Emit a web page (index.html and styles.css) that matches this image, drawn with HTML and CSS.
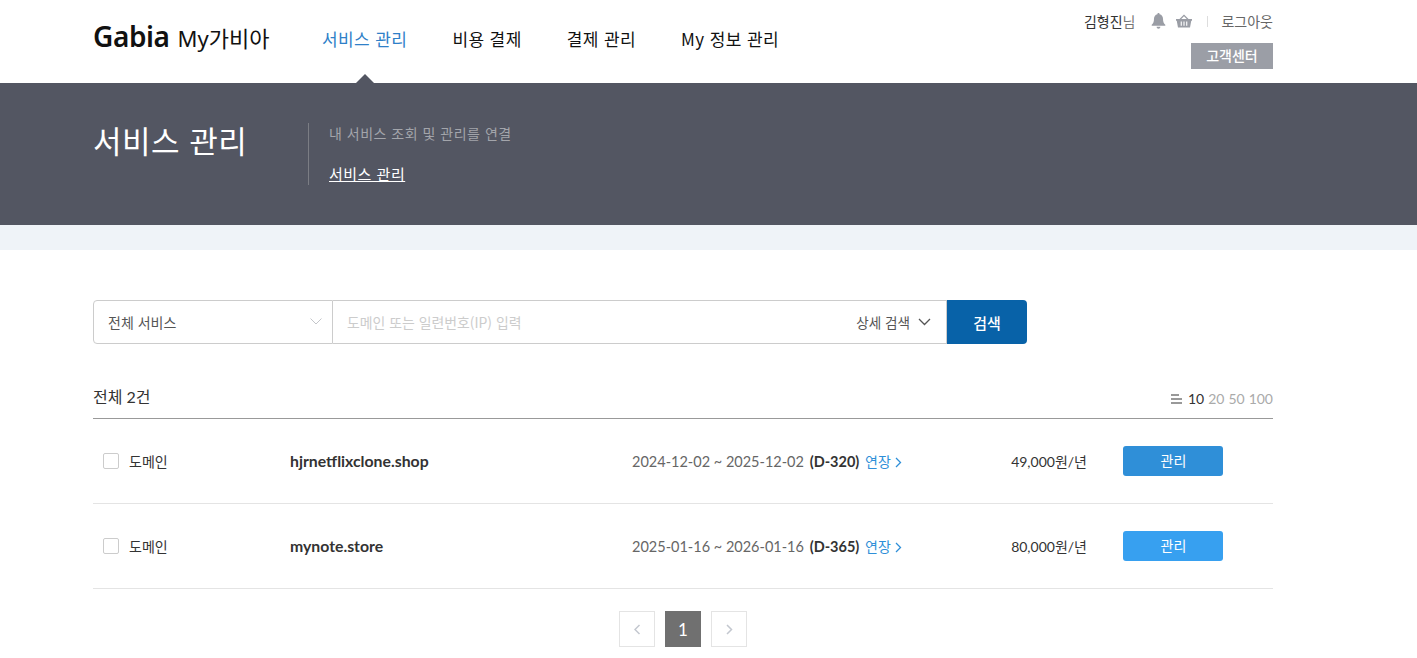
FILE: index.html
```html
<!DOCTYPE html>
<html lang="ko">
<head>
    <meta charset="UTF-8">
    <meta name="viewport" content="width=device-width, initial-scale=1.0">
    <title>My가비아 - 서비스 관리</title>
    <link rel="stylesheet" href="styles.css">
</head>
<body>
    <header class="header">
        <div class="wrap header-inner">
            <a class="logo" href="#"><span class="logo-brand">Gabia</span> <span class="logo-sub">My가비아</span></a>
            <nav class="gnb">
                <a class="gnb-item active" href="#">서비스 관리</a>
                <a class="gnb-item" href="#">비용 결제</a>
                <a class="gnb-item" href="#">결제 관리</a>
                <a class="gnb-item" href="#">My 정보 관리</a>
            </nav>
            <div class="util">
                <div class="util-top">
                    <span class="user"><b>김형진</b>님</span>
                    <svg class="icon-bell" width="15" height="16" viewBox="0 0 15 16"><path fill="#9a9da5" d="M7.5 0c.7 0 1.1.5 1.1 1.2C10.800 1.700 12 3.500 12 5.800c0 3.200.8 4.600 2.300 6v1H.7v-1C2.200 10.400 3 9 3 5.800 3 3.500 4.200 1.700 6.400 1.200 6.400.5 6.800 0 7.500 0zM5.600 13.800h3.800c0 1.100-.8 2-1.900 2s-1.900-.9-1.900-2z"/></svg>
                    <svg class="icon-basket" width="16" height="14" viewBox="0 0 17 14"><path fill="#9a9da5" d="M8.500 0 13.300 5H17v1.700h-.8L14.900 14H2.100L.8 6.700H0V5h3.700zM8.500 1.900 5.600 5h5.800zM5 7.500v4.500h1.200V7.500zm2.900 0v4.500h1.200V7.500zm2.900 0v4.500H12V7.500z"/></svg>
                    <i class="util-sep"></i>
                    <a class="logout" href="#">로그아웃</a>
                </div>
                <a class="cs-btn" href="#">고객센터</a>
            </div>
        </div>
    </header>

    <section class="banner">
        <div class="wrap banner-inner">
            <h1 class="banner-title">서비스 관리</h1>
            <div class="banner-desc">
                <p>내 서비스 조회 및 관리를 연결</p>
                <a href="#">서비스 관리</a>
            </div>
        </div>
    </section>
    <div class="strip"></div>

    <main class="wrap content">
        <form class="search">
            <div class="search-select">
                <span>전체 서비스</span>
                <svg width="12" height="7" viewBox="0 0 12 7"><path d="M.5.5 6 6 11.500.5" fill="none" stroke="#c4c6ca"/></svg>
            </div>
            <div class="search-field">
                <span class="placeholder">도메인 또는 일련번호(IP) 입력</span>
                <span class="search-more">상세 검색
                    <svg width="13" height="8" viewBox="0 0 13 8"><path d="M1 1l5.500 5.500L12 1" fill="none" stroke="#555" stroke-width="1.300"/></svg>
                </span>
            </div>
            <button class="search-btn" type="button">검색</button>
        </form>

        <div class="list-head">
            <span class="total">전체 2건</span>
            <div class="page-size">
                <svg width="11" height="10" viewBox="0 0 11 10"><path fill="#999" d="M0 0h8v2H0zM0 4h11v2H0zM0 8h11v2H0z"/></svg>
                <b>10</b><span>20</span><span>50</span><span>100</span>
            </div>
        </div>

        <ul class="list">
            <li class="row">
                <label class="row-type"><i class="check"></i>도메인</label>
                <strong class="row-name">hjrnetflixclone.shop</strong>
                <div class="row-date">2024-12-02 ~ 2025-12-02 <b>(D-320)</b> <a href="#">연장<svg width="7" height="11" viewBox="0 0 7 11"><path d="M1 1l4.500 4.500L1 10" fill="none" stroke="#2f8fd8" stroke-width="1.300"/></svg></a></div>
                <div class="row-price">49,000원/년</div>
                <a class="row-btn dim" href="#">관리</a>
            </li>
            <li class="row">
                <label class="row-type"><i class="check"></i>도메인</label>
                <strong class="row-name">mynote.store</strong>
                <div class="row-date">2025-01-16 ~ 2026-01-16 <b>(D-365)</b> <a href="#">연장<svg width="7" height="11" viewBox="0 0 7 11"><path d="M1 1l4.500 4.500L1 10" fill="none" stroke="#2f8fd8" stroke-width="1.300"/></svg></a></div>
                <div class="row-price">80,000원/년</div>
                <a class="row-btn" href="#">관리</a>
            </li>
        </ul>

        <div class="pager">
            <a class="pager-btn" href="#"><svg width="7" height="11" viewBox="0 0 7 11"><path d="M5.500 1 1 5.500 5.500 10" fill="none" stroke="#c3c7cf" stroke-width="1.500"/></svg></a>
            <a class="pager-num" href="#">1</a>
            <a class="pager-btn" href="#"><svg width="7" height="11" viewBox="0 0 7 11"><path d="M1 1l4.500 4.500L1 10" fill="none" stroke="#c3c7cf" stroke-width="1.500"/></svg></a>
        </div>
    </main>
</body>
</html>
```

FILE: styles.css
```css
* {
    box-sizing: border-box;
}

body {
    margin: 0;
    height: 658px;
    overflow: hidden;
    background: #fff;
    font-family: Lato, "Noto Sans CJK KR", sans-serif;
    font-size: 14px;
    color: #333;
}

a {
    text-decoration: none;
    color: inherit;
}

.wrap {
    width: 1180px;
    margin-left: 93px;
}

/* header */
.header {
    height: 83px;
}

.header-inner {
    display: flex;
    height: 83px;
    position: relative;
}

.logo {
    display: flex;
    align-items: baseline;
    padding-top: 17px;
    width: 229px;
    color: #111;
}

.logo-brand {
    font-family: "Noto Sans", sans-serif;
    font-size: 28px;
    font-weight: 600;
    letter-spacing: -0.4px;
    margin-right: 8px;
}

.logo-sub {
    font-family: "Noto Sans", "Noto Sans CJK KR", sans-serif;
    font-size: 22px;
}

.gnb {
    display: flex;
    gap: 45px;
    padding-top: 27px;
}

.gnb-item {
    font-family: "Noto Sans CJK KR", sans-serif;
    font-size: 17px;
    letter-spacing: 0.4px;
    line-height: 24px;
    color: #111;
    position: relative;
    height: 56px;
}

.gnb-item.active {
    color: #2f80c8;
}

.gnb-item.active::after {
    content: "";
    position: absolute;
    left: 50%;
    bottom: 0;
    margin-left: -9px;
    border: 9px solid transparent;
    border-top: 0;
    border-bottom-color: #535662;
}

.util {
    margin-left: auto;
    display: flex;
    flex-direction: column;
    align-items: flex-end;
}

.util-top {
    display: flex;
    align-items: center;
    height: 43px;
    padding-bottom: 1px;
    font-family: "Noto Sans CJK KR", sans-serif;
    font-size: 14px;
    color: #666;
}

.user {
    color: #777;
    margin-right: 16px;
}

.user b {
    font-weight: 400;
    color: #333;
}

.icon-basket {
    margin-left: 10px;
}

.util-sep {
    width: 1px;
    height: 11px;
    background: #ddd;
    margin: 0 13px 0 15px;
}

.cs-btn {
    width: 82px;
    height: 26px;
    line-height: 25px;
    text-align: center;
    background: #9b9ea6;
    color: #fff;
    font-family: "Noto Sans CJK KR", sans-serif;
    font-size: 14px;
    font-weight: 500;
}

/* banner */
.banner {
    height: 142px;
    background: #535662;
}

.banner-inner {
    display: flex;
    padding-top: 39px;
}

.banner-title {
    width: 215px;
    margin: 0;
    font-family: "Noto Sans CJK KR", sans-serif;
    font-size: 31px;
    font-weight: 400;
    letter-spacing: 0.5px;
    line-height: 36px;
    color: #fff;
}

.banner-desc {
    height: 62px;
    margin-top: 1px;
    padding-left: 20px;
    border-left: 1px solid #7b7d84;
    font-family: "Noto Sans CJK KR", sans-serif;
}

.banner-desc p {
    margin: 0 0 19px;
    font-size: 14px;
    letter-spacing: 0.5px;
    line-height: 21px;
    color: #a3a5ab;
}

.banner-desc a {
    font-size: 15px;
    letter-spacing: 0.5px;
    line-height: 22px;
    color: #fff;
    text-decoration: underline;
}

.strip {
    height: 25px;
    background: #eff3f8;
}

/* search */
.content {
    padding-top: 50px;
}

.search {
    display: flex;
    width: 934px;
    height: 44px;
    font-family: "Noto Sans CJK KR", sans-serif;
    font-size: 14px;
}

.search-select {
    width: 240px;
    display: flex;
    align-items: center;
    justify-content: space-between;
    padding: 0 10px 1px 14px;
    border: 1px solid #ccc;
    border-radius: 4px 0 0 4px;
    color: #555;
}

.search-field {
    flex: 1;
    display: flex;
    align-items: center;
    justify-content: space-between;
    padding: 0 15px 1px 14px;
    border: 1px solid #ccc;
    border-left: 0;
}

.placeholder {
    font-size: 13.9px;
    color: #ccc;
}

.search-more {
    display: flex;
    align-items: center;
    gap: 8px;
    font-size: 13.6px;
    color: #555;
}

.search-btn {
    width: 80px;
    border: 0;
    border-radius: 0 4px 4px 0;
    background: #0862a8;
    color: #fff;
    font-family: inherit;
    font-size: 15px;
    font-weight: 500;
}

/* list */
.list-head {
    display: flex;
    justify-content: space-between;
    align-items: flex-end;
    height: 75px;
    padding-bottom: 10px;
    border-bottom: 1px solid #999;
}

.total {
    font-size: 16px;
    line-height: 22px;
    color: #333;
}

.page-size {
    display: flex;
    align-items: center;
    gap: 4px;
    font-size: 14px;
    line-height: 18px;
    color: #aaa;
}

.page-size svg {
    margin-right: 2px;
}

.page-size b {
    font-weight: 400;
    color: #333;
}

.list {
    list-style: none;
    margin: 0;
    padding: 0;
}

.row {
    display: flex;
    align-items: center;
    height: 85px;
    border-bottom: 1px solid #e4e4e4;
}

.row-type {
    width: 197px;
    display: flex;
    align-items: center;
    padding-left: 10px;
    color: #333;
}

.check {
    width: 16px;
    height: 16px;
    margin-right: 10px;
    border: 1px solid #ccc;
    border-radius: 2px;
}

.row-name {
    width: 342px;
    padding-bottom: 2px;
    font-size: 15.8px;
    font-weight: 700;
    color: #333;
}

.row-date {
    width: 300px;
    font-size: 14.5px;
    color: #666;
    white-space: nowrap;
}

.row-date b {
    margin-left: 2px;
    color: #333;
}

.row-date a {
    margin-left: 2px;
    font-size: 14px;
    color: #2f8fd8;
}

.row-date svg {
    margin-left: 4px;
    vertical-align: -1px;
}

.row-price {
    width: 155px;
    text-align: right;
    color: #333;
}

.row-btn {
    width: 100px;
    height: 30px;
    margin-left: 36px;
    padding-left: 1px;
    border-radius: 3px;
    background: #37a0f0;
    color: #fff;
    line-height: 30px;
    text-align: center;
}

.row-btn.dim {
    background: #2f8fd8;
}

/* pager */
.pager {
    display: flex;
    justify-content: center;
    gap: 10px;
    margin-top: 22px;
}

.pager-btn,
.pager-num {
    width: 36px;
    height: 36px;
    display: flex;
    align-items: center;
    justify-content: center;
}

.pager-btn {
    border: 1px solid #e4e4e4;
}

.pager-num {
    background: #707070;
    color: #fff;
    font-size: 17px;
}
```
